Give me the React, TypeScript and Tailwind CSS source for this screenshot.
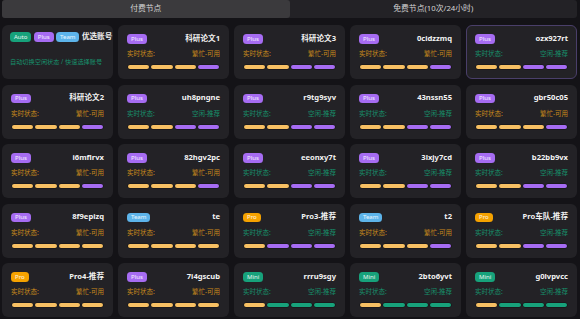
import React from "react";

type Kind = "Plus" | "Team" | "Pro" | "Mini";
type Bar = "o" | "p" | "g";
type Node = { kind: Kind; name: string; idle: boolean; bars: Bar[]; selected?: boolean };

const badgeCls: Record<Kind, string> = {
  Plus: "bg-[#a66cf2]",
  Team: "bg-[#5db4ea]",
  Pro: "bg-[#f5a200]",
  Mini: "bg-[#17a27b]",
};

const barCls: Record<Bar, string> = {
  o: "bg-[#f7c063]",
  p: "bg-[#a66cf2]",
  g: "bg-[#17a27b]",
};

const b = (s: string) => s.split("") as Bar[];

const nodes: Node[] = [
  { kind: "Plus", name: "科研论文1", idle: false, bars: b("ooop") },
  { kind: "Plus", name: "科研论文3", idle: false, bars: b("oopp") },
  { kind: "Plus", name: "0cidzzmq", idle: false, bars: b("ooop") },
  { kind: "Plus", name: "ozx927rt", idle: true, bars: b("oopp"), selected: true },
  { kind: "Plus", name: "科研论文2", idle: false, bars: b("ooop") },
  { kind: "Plus", name: "uh8pngne", idle: true, bars: b("oopp") },
  { kind: "Plus", name: "r9tg9syv", idle: true, bars: b("oopp") },
  { kind: "Plus", name: "43nssn55", idle: true, bars: b("oopp") },
  { kind: "Plus", name: "gbr50c05", idle: false, bars: b("ooop") },
  { kind: "Plus", name: "i6mflrvx", idle: false, bars: b("ooop") },
  { kind: "Plus", name: "82hgv2pc", idle: false, bars: b("ooop") },
  { kind: "Plus", name: "eeonxy7t", idle: true, bars: b("oopp") },
  { kind: "Plus", name: "3lxjy7cd", idle: true, bars: b("oopp") },
  { kind: "Plus", name: "b22bb9vx", idle: true, bars: b("oopp") },
  { kind: "Plus", name: "8f9epizq", idle: false, bars: b("oooo") },
  { kind: "Team", name: "te", idle: false, bars: b("oooo") },
  { kind: "Pro", name: "Pro3-推荐", idle: true, bars: b("oppp") },
  { kind: "Team", name: "t2", idle: false, bars: b("ooop") },
  { kind: "Pro", name: "Pro车队-推荐", idle: true, bars: b("oopp") },
  { kind: "Pro", name: "Pro4-推荐", idle: false, bars: b("oooo") },
  { kind: "Plus", name: "7i4gscub", idle: false, bars: b("oooo") },
  { kind: "Mini", name: "rrru9sgy", idle: true, bars: b("oggg") },
  { kind: "Mini", name: "2bto6yvt", idle: true, bars: b("oggg") },
  { kind: "Mini", name: "g0lvpvcc", idle: true, bars: b("oggg") },
];

function Badge({ kind }: { kind: Kind | "Auto" }) {
  const cls = kind === "Auto" ? "bg-[#17a27b]" : badgeCls[kind];
  return (
    <span
      className={`${cls} inline-flex items-center justify-center h-[9.5px] px-[4px] rounded-[3.5px] text-[6px] leading-none text-white/90`}
    >
      {kind}
    </span>
  );
}

function Card({ n }: { n: Node }) {
  const color = n.idle ? "text-[#17906b]" : "text-[#c98a1c]";
  return (
    <div
      className={`h-[54px] rounded-[6px] bg-[#232226] flex flex-col ${
        n.selected ? "border border-[#4a3f6a] px-[8px] pt-[8px] pb-[9px]" : "px-[9px] pt-[9px] pb-[10px]"
      }`}
    >
      <div className="flex items-center justify-between h-[9.5px]">
        <Badge kind={n.kind} />
        <span className="text-[7.6px] font-bold text-[#f2f2f2] leading-none whitespace-nowrap">{n.name}</span>
      </div>
      <div className={`flex items-center justify-between mt-[6.5px] text-[6.5px] leading-[8px] ${color}`}>
        <span>实时状态:</span>
        <span>{n.idle ? "空闲-推荐" : "繁忙-可用"}</span>
      </div>
      <div className="mt-auto flex gap-[2px] px-[1px]">
        {n.bars.map((c, i) => (
          <div key={i} className={`${barCls[c]} flex-1 h-[4px] rounded-full ring-[0.5px] ring-black/50`} />
        ))}
      </div>
    </div>
  );
}

export default function App() {
  return (
    <div
      className="w-[580px] h-[319px] overflow-hidden bg-[#141317] pl-[2px] pr-[3px]"
      style={{ fontFamily: '"Noto Sans", "Noto Sans CJK SC", sans-serif' }}
    >
      <div className="flex h-[18px] rounded-[3px] bg-[#232226] text-[7.8px] text-[#d4d4d4]">
        <div className="flex-1 flex items-center justify-center bg-[#3b3a3d] rounded-[3px]">付费节点</div>
        <div className="flex-1 flex items-center justify-center">免费节点(10次/24小时)</div>
      </div>
      <div className="grid grid-cols-5 gap-x-[5px] gap-y-[5.5px] mt-[7px]">
        <div className="h-[54px] rounded-[6px] bg-[#232226] px-[8px] pt-[7px] flex flex-col">
          <div className="flex items-center gap-[2.5px] h-[9.5px]">
            <Badge kind="Auto" />
            <Badge kind="Plus" />
            <Badge kind="Team" />
            <span className="text-[7.6px] font-bold text-[#f2f2f2] leading-none whitespace-nowrap">优选账号</span>
          </div>
          <div className="mt-[15.5px] text-[6.2px] text-[#17906b] whitespace-nowrap">自动切换空闲状态 / 快速选择账号</div>
        </div>
        {nodes.map((n, i) => (
          <Card key={i} n={n} />
        ))}
      </div>
    </div>
  );
}
